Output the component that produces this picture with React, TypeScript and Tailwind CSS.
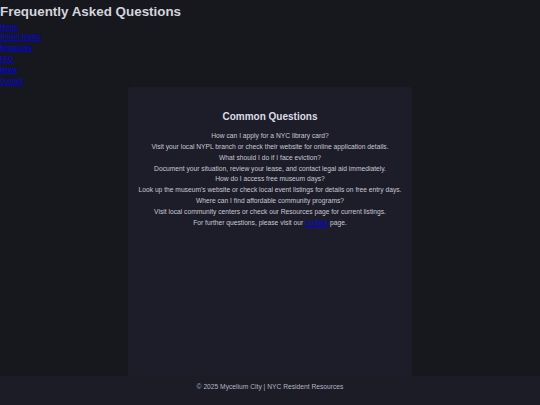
const navLinks = ['Home', 'Tenant Rights', 'Resources', 'FAQ', 'News', 'Contact'];

const faqs = [
  {
    q: 'How can I apply for a NYC library card?',
    a: 'Visit your local NYPL branch or check their website for online application details.',
  },
  {
    q: 'What should I do if I face eviction?',
    a: 'Document your situation, review your lease, and contact legal aid immediately.',
  },
  {
    q: 'How do I access free museum days?',
    a: "Look up the museum's website or check local event listings for details on free entry days.",
  },
  {
    q: 'Where can I find affordable community programs?',
    a: 'Visit local community centers or check our Resources page for current listings.',
  },
];

export default function App() {
  return (
    <div className="h-[405px] flex flex-col bg-[#17181d] font-['Liberation_Sans',Arial,sans-serif] overflow-hidden">
      {/* Header */}
      <header>
        <h1 className="mt-[4px] text-[13.4px] leading-[15px] font-bold text-[#d4d4dc]">
          Frequently Asked Questions
        </h1>
        <nav className="mt-[2.5px]">
          <ul>
            {navLinks.map((link) => (
              <li key={link} className="text-[6.7px] leading-[10.85px]">
                <a href="#" className="text-[#0000ee] underline">
                  {link}
                </a>
              </li>
            ))}
          </ul>
        </nav>
      </header>

      {/* FAQ card */}
      <main className="flex-1 flex justify-center">
        <section className="w-[284px] bg-[#1d1d29] rounded-t-[3px] pt-[23px] text-center">
          <h2 className="text-[10px] leading-[14px] font-bold text-[#dcdce4]">Common Questions</h2>
          <div className="mt-[7.5px] text-[6.7px] leading-[10.85px] text-[#c8c8d2]">
            {faqs.map((item) => (
              <div key={item.q}>
                <p>{item.q}</p>
                <p>{item.a}</p>
              </div>
            ))}
            <p>
              For further questions, please visit our{' '}
              <a href="#" className="text-[#0000ee] underline">
                Contact
              </a>{' '}
              page.
            </p>
          </div>
        </section>
      </main>

      {/* Footer */}
      <footer className="h-[29px] bg-[#1c1c27] pt-[5.5px] text-center text-[6.7px] leading-[10.8px] text-[#b4b4c0]">
        © 2025 Mycelium City | NYC Resident Resources
      </footer>
    </div>
  );
}
